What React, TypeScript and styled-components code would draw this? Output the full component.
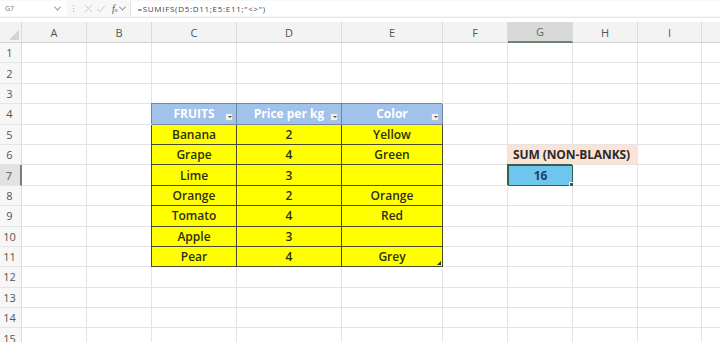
import styled, { createGlobalStyle, css } from "styled-components";

const GlobalStyle = createGlobalStyle`
    html, body {
        margin: 0;
        padding: 0;
        background: #ffffff;
    }
    body {
        width: 720px;
        height: 342px;
        overflow: hidden;
        font-family: "Open Sans", "Liberation Sans", sans-serif;
    }
`;

const columns = ["A", "B", "C", "D", "E", "F", "G", "H", "I", "J"];
const widths = [65, 65, 85, 105, 101, 65, 65, 65, 64, 80];

type Kind = "plain" | "head" | "data" | "label" | "result";

// table data: rows 4..11, columns C..E
const table: Record<number, string[]> = {
    4: ["FRUITS", "Price per kg", "Color"],
    5: ["Banana", "2", "Yellow"],
    6: ["Grape", "4", "Green"],
    7: ["Lime", "3", ""],
    8: ["Orange", "2", "Orange"],
    9: ["Tomato", "4", "Red"],
    10: ["Apple", "3", ""],
    11: ["Pear", "4", "Grey"],
};

export default function App() {
    const rows = Array.from({ length: 15 }, (_, i) => i + 1);

    const renderRow = (r: number) => {
        const cells = [];
        for (let c = 0; c < columns.length; c++) {
            const col = columns[c];
            if (r >= 4 && r <= 11 && c >= 2 && c <= 4) {
                const head = r === 4;
                cells.push(
                    <Cell key={col + r} $kind={head ? "head" : "data"}>
                        {table[r][c - 2]}
                        {head && <FilterButton />}
                        {r === 11 && c === 4 && <ResizeHandle />}
                    </Cell>
                );
            } else if (r === 6 && col === "G") {
                cells.push(
                    <Cell key={col + r} $kind="label" $span={2}>
                        SUM (NON-BLANKS)
                    </Cell>
                );
                c++;
            } else if (r === 7 && col === "G") {
                cells.push(
                    <Cell key={col + r} $kind="result">
                        16
                        <FillHandle />
                    </Cell>
                );
            } else {
                cells.push(<Cell key={col + r} $kind="plain" />);
            }
        }
        return cells;
    };

    return (
        <>
            <GlobalStyle />
            <Page>
                <FormulaBar>
                    <NameBox>
                        <span>G7</span>
                        <Chevron />
                    </NameBox>
                    <Dots>⋮</Dots>
                    <BarIcon>
                        <svg width="9" height="9" viewBox="0 0 9 9">
                            <path d="M1 1L8 8M8 1L1 8" stroke="#c8c8c8" strokeWidth="1" />
                        </svg>
                    </BarIcon>
                    <BarIcon>
                        <svg width="10" height="9" viewBox="0 0 10 9">
                            <path d="M1 5L3.8 7.8L9 1.5" stroke="#c8c8c8" strokeWidth="1" fill="none" />
                        </svg>
                    </BarIcon>
                    <Fx>
                        <i>f</i>
                        <small>x</small>
                    </Fx>
                    <Chevron />
                    <FormulaInput>=SUMIFS(D5:D11;E5:E11;"&lt;&gt;")</FormulaInput>
                </FormulaBar>

                <Sheet>
                    <Corner>
                        <svg width="10" height="10" viewBox="0 0 10 10">
                            <path d="M10 0V10H0Z" fill="#d4d4d4" />
                        </svg>
                    </Corner>
                    {columns.map((col) => (
                        <ColHeader key={col} $selected={col === "G"}>
                            {col}
                        </ColHeader>
                    ))}
                    {rows.map((r) => (
                        <Row key={r}>
                            <RowHeader $selected={r === 7}>{r}</RowHeader>
                            {renderRow(r)}
                        </Row>
                    ))}
                </Sheet>
            </Page>
        </>
    );
}

/* ======= Styled Components ======= */

const Page = styled.div`
    width: 720px;
    height: 342px;
    overflow: hidden;
    background: #ffffff;
`;

const FormulaBar = styled.div`
    display: flex;
    align-items: center;
    height: 17px;
    background: #f8f8f8;
    border-bottom: 1px solid #e6e6e6;
    margin-bottom: 4px;
    font-size: 7px;
    color: #666;
`;

const NameBox = styled.div`
    display: flex;
    align-items: center;
    justify-content: space-between;
    width: 58px;
    height: 15px;
    padding: 0 4px 0 5px;
    background: #ffffff;
    color: #777;
    font-size: 7px;
`;

const Chevron = styled.span`
    width: 4px;
    height: 4px;
    border-right: 1px solid #888;
    border-bottom: 1px solid #888;
    transform: rotate(45deg) translate(-1px, -1px);
    margin: 0 3px;
`;

const Dots = styled.span`
    margin: 0 6px 0 2px;
    color: #aaa;
    font-size: 9px;
`;

const BarIcon = styled.span`
    display: flex;
    align-items: center;
    margin-right: 3px;
`;

const Fx = styled.span`
    display: flex;
    align-items: baseline;
    margin-left: 3px;
    font-family: "Liberation Serif", serif;
    color: #555;
    font-size: 10px;

    small {
        font-size: 6px;
        font-style: italic;
    }
`;

const FormulaInput = styled.div`
    flex: 1;
    display: flex;
    align-items: center;
    height: 15px;
    margin-left: 2px;
    padding-left: 6px;
    background: #ffffff;
    border-left: 1px solid #e2e2e2;
    font-size: 8px;
    color: #444;
    letter-spacing: 0.7px;
`;

const Sheet = styled.div`
    display: grid;
    grid-template-columns: 22px ${widths.map((w) => w + "px").join(" ")};
    grid-template-rows: 21px repeat(15, 20.4px);
`;

const Row = styled.div`
    display: contents;
`;

const Corner = styled.div`
    display: flex;
    align-items: flex-end;
    justify-content: flex-end;
    padding: 0 2px 2px 0;
    background: #f3f3f3;
    border-right: 1px solid #dcdcdc;
    border-bottom: 1px solid #d2d2d2;
`;

const ColHeader = styled.div<{ $selected?: boolean }>`
    display: flex;
    align-items: center;
    justify-content: center;
    background: ${(p) => (p.$selected ? "#d9d9d9" : "#f3f3f3")};
    border-right: 1px solid #dcdcdc;
    border-bottom: ${(p) => (p.$selected ? "2px solid #6b8572" : "1px solid #d2d2d2")};
    color: ${(p) => (p.$selected ? "#4d7a5e" : "#555")};
    font-size: 11px;
`;

const RowHeader = styled.div<{ $selected?: boolean }>`
    display: flex;
    align-items: center;
    justify-content: center;
    padding-right: 2px;
    background: ${(p) => (p.$selected ? "#e2e2e2" : "#f7f7f7")};
    border-right: ${(p) => (p.$selected ? "2px solid #6b8572" : "1px solid #dcdcdc")};
    border-bottom: 1px solid #e6e6e6;
    color: #555;
    font-size: 11px;
`;

const kindStyles = {
    plain: css`
        background: #ffffff;
    `,
    head: css`
        justify-content: center;
        background: #a1c2ea;
        color: #ffffff;
        font-weight: 700;
        border-right-color: #6f86a6;
        border-bottom-color: #6f86a6;
        box-shadow: -1px -1px 0 0 #6f86a6;
    `,
    data: css`
        justify-content: center;
        background: #ffff00;
        color: #2e2e1a;
        font-weight: 600;
        border-right-color: #4a4a2c;
        border-bottom-color: #4a4a2c;
        box-shadow: -1px 0 0 0 #4a4a2c;
    `,
    label: css`
        padding-left: 5px;
        background: #fbe3d6;
        color: #2b2b2b;
        font-weight: 700;
        font-size: 12px;
        letter-spacing: -0.1px;
        border-right-color: #fbe3d6;
    `,
    result: css`
        justify-content: center;
        background: #6ec6ef;
        color: #1d3f5e;
        font-weight: 700;
        border: 1px solid #37604a;
        box-shadow: -1px -1px 0 0 #37604a;
    `,
};

const Cell = styled.div<{ $kind: Kind; $span?: number }>`
    position: relative;
    display: flex;
    align-items: center;
    grid-column: span ${(p) => p.$span ?? 1};
    border-right: 1px solid #e4e4e4;
    border-bottom: 1px solid #e4e4e4;
    font-size: 12px;
    white-space: nowrap;
    ${(p) => kindStyles[p.$kind]}
`;

const FilterButton = styled.span`
    position: absolute;
    right: 3px;
    bottom: 3px;
    width: 8px;
    height: 8px;
    background: #f0f0f0;
    border: 1px solid #b8c4d4;
    box-sizing: border-box;

    &::after {
        content: "";
        position: absolute;
        left: 1.5px;
        top: 2.5px;
        border-left: 2px solid transparent;
        border-right: 2px solid transparent;
        border-top: 2px solid #555;
    }
`;

const ResizeHandle = styled.span`
    position: absolute;
    right: 1px;
    bottom: 1px;
    width: 0;
    height: 0;
    border-left: 4px solid transparent;
    border-bottom: 4px solid #333;
`;

const FillHandle = styled.span`
    position: absolute;
    right: -3px;
    bottom: -3px;
    width: 4px;
    height: 4px;
    background: #2f5f45;
    border: 1px solid #ffffff;
`;
